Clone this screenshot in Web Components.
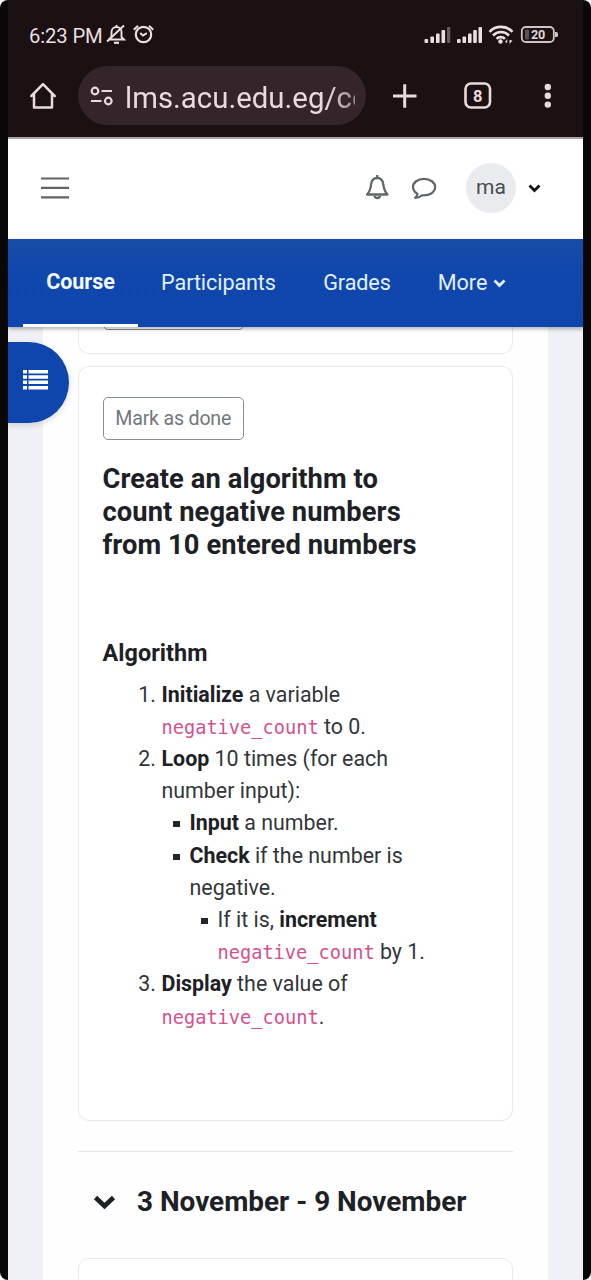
<!DOCTYPE html>
<html lang="en">
<head>
<meta charset="utf-8">
<title>Course</title>
<style>
html,body{margin:0;padding:0;background:#fff;width:591px;height:1280px;overflow:hidden}
body{font-family:Roboto,"Liberation Sans",sans-serif;color:#1d2125}
</style>
</head>
<body>
<phone-frame>
  <status-bar></status-bar>
  <browser-bar></browser-bar>
  <site-header></site-header>
  <course-nav>
    <nav-tab active style="--w:115px;--ls:-.1px">Course</nav-tab>
    <nav-tab style="--w:161px;--ls:-.1px">Participants</nav-tab>
    <nav-tab style="--w:116px;--ls:-.1px">Grades</nav-tab>
    <nav-tab more style="--w:114px;--ls:0px">More</nav-tab>
  </course-nav>
  <course-page></course-page>
</phone-frame>
<script>
const define = (name, html) => customElements.define(name, class extends HTMLElement {
  constructor() {
    super();
    const t = document.createElement('template');
    t.innerHTML = html;
    this.attachShadow({mode: 'open'}).append(t.content.cloneNode(true));
  }
});

define('phone-frame', `
<style>
:host{display:flex;flex-direction:column;box-sizing:border-box;width:591px;height:1280px;background:#fff;border:solid #080808;border-width:0 8px;border-radius:8px;overflow:hidden}
</style><slot></slot>`);

define('status-bar', `
<style>
:host{display:flex;flex:none;align-items:center;height:66px;box-sizing:border-box;padding:4px 25px 0 21px;background:#1b1113;color:#eadfe1;font-size:20.3px;letter-spacing:-.15px}
span{white-space:nowrap;width:76px;padding-top:1px}
svg{display:block;flex:none}
.gap{flex:1}
</style>
<span>6:23 PM</span>
<svg width="50" height="24" viewBox="0 0 50 24" fill="none" stroke="#eadfe1" stroke-width="1.9">
  <path d="M4 16.500 H19 L16.500 14 V9 A5 5 0 0 0 6.500 9 V13.500 L4 16.500"/><path d="M11.500 4V2"/>
  <path d="M2 18.500 L19 2.500" stroke-width="2"/><path d="M9 19.800h5" stroke-width="2.200"/>
  <circle cx="38.500" cy="11.500" r="7.700" stroke-width="2.200"/><path d="M35.200 10L38 12.500l3.800-2.300" stroke-width="2"/>
  <path d="M28.800 6.700l4.200-4M48.200 6.700L44 2.700" stroke-width="2"/>
</svg>
<div class="gap"></div>
<svg width="136" height="24" viewBox="422 23 136 24">
  <g fill="#eadfe1">
    <rect x="424.500" y="39" width="3.600" height="4" rx="1"/><rect x="430.400" y="36.500" width="3.600" height="6.500" rx="1"/><rect x="436" y="33.500" width="3.600" height="9.500" rx="1"/><rect x="441.500" y="30" width="3.600" height="13" rx="1"/><rect x="447" y="27" width="3.300" height="16" rx="1" fill="#665c5e"/>
    <rect x="457" y="39" width="3.600" height="4" rx="1"/><rect x="462.500" y="36.500" width="3.600" height="6.500" rx="1"/><rect x="468" y="33.500" width="3.600" height="9.500" rx="1"/><rect x="473.200" y="30" width="3.600" height="13" rx="1"/><rect x="478.500" y="27" width="3.500" height="16" rx="1"/>
    <circle cx="500.500" cy="41.500" r="2.200"/>
    <path d="M505 42l2.200-3v4zM512.500 40.500l-3 3.500v-4z"/>
  </g>
  <g fill="none" stroke="#eadfe1" stroke-width="2.600"><path d="M489.500 31.800a16 16 0 0 1 23 0"/><path d="M493 35.500a11 11 0 0 1 16 0"/><path d="M496.500 38.900a6 6 0 0 1 8.500 0"/></g>
  <rect x="521.800" y="27" width="32" height="15" rx="4" fill="none" stroke="#cfc5c7" stroke-width="1.800"/>
  <rect x="525" y="29.500" width="4" height="10" rx="1" fill="#5d5355"/>
  <path d="M555 32h1.500q1.500 0 1.500 1.500v2q0 1.500-1.500 1.500H555z" fill="#cfc5c7"/>
  <text x="538" y="39.200" text-anchor="middle" font-family="Roboto,sans-serif" font-weight="700" font-size="12.600" fill="#e0d6d8">20</text>
</svg>`);

define('browser-bar', `
<style>
:host{display:flex;flex:none;align-items:flex-start;height:73px;box-sizing:border-box;padding-left:21px;background:#1b1113;border-bottom:2px solid #aaa4a5;color:#eadadd}
svg{display:block;flex:none}
.pill{display:flex;align-items:center;box-sizing:border-box;width:288px;height:59px;margin-left:21px;border-radius:30px;background:#35242a;padding-left:11px}
.url{width:230px;overflow:hidden;white-space:nowrap;font-size:29.3px;line-height:44px;margin:4px 0 0 12px;letter-spacing:.05px;-webkit-mask-image:linear-gradient(90deg,#000 88%,rgba(0,0,0,.55))}
</style>
<svg width="28" height="59" viewBox="29 66 28 59" fill="none" stroke="currentColor" stroke-width="2.500" stroke-linejoin="round" stroke-linecap="round"><path d="M31.300 96L43 84.200 54.700 96M34 94v13.500h18V94"/></svg>
<div class="pill">
  <svg width="24" height="24" viewBox="89 83.500 24 24" fill="none" stroke="currentColor" stroke-width="2.200"><circle cx="95" cy="90.500" r="3.300"/><path d="M101.500 90.500H112M91 100.500h10.500"/><circle cx="108.300" cy="100.500" r="3.300"/></svg>
  <div class="url">lms.acu.edu.eg/co</div>
</div>
<svg width="216" height="59" viewBox="366 66 216 59" fill="none" stroke="currentColor">
  <path d="M393 96h23.500M404.700 84.300v23.400" stroke-width="3"/>
  <rect x="465.500" y="83.500" width="24.500" height="24" rx="5.500" stroke-width="2.600"/>
  <text x="477.800" y="101.500" text-anchor="middle" stroke="none" fill="currentColor" font-family="Roboto,sans-serif" font-weight="700" font-size="16.500">8</text>
  <g fill="currentColor" stroke="none"><circle cx="547.800" cy="87" r="3.200"/><circle cx="547.800" cy="95.800" r="3.200"/><circle cx="547.800" cy="104.600" r="3.200"/></g>
</svg>`);

define('site-header', `
<style>
:host{display:flex;flex:none;align-items:center;height:100px;box-sizing:border-box;padding:0 42px 2px 33px;background:#fff}
svg{display:block;flex:none}
.gap{flex:1}
.av{width:50px;height:50px;border-radius:50%;background:#e9ebee;color:#484d52;font-size:21px;line-height:49px;text-align:center;margin:0 12px 0 28px}
</style>
<svg width="30" height="24" viewBox="0 0 30 24" stroke="#67625f" stroke-width="2.200"><path d="M0 2.500h28M0 11.900h28M0 21.400h28"/></svg>
<div class="gap"></div>
<svg width="72" height="28" viewBox="365.500 174 72 28" fill="none" stroke="#64676a" stroke-width="2.300" stroke-linejoin="round">
  <path d="M366.500 194.500H387C384 191.500 383.300 188 382.800 184.500C382.400 180.500 380.300 178 376.700 178S371 180.500 370.600 184.500C370.200 188 369.500 191.500 366.500 194.500Z"/><path d="M376.700 175v3M374 195.800a2.700 2.200 0 0 0 5.400 0"/>
  <path d="M423.500 178.800c-6.200 0-11 3.700-11 8.300 0 2.900 1.800 5.300 4.500 6.800-.3 1.800-1 3-2.300 4 3 .1 5-.9 6.700-2.600 7.500.7 13.200-3 13.200-8.200 0-4.600-4.900-8.300-11.100-8.300Z"/>
</svg>
<div class="av">ma</div>
<svg width="13" height="10" viewBox="0 0 13 10" fill="none" stroke="#151515" stroke-width="2.800"><path d="M1.500 2.500l5 5 5-5"/></svg>`);

define('course-nav', `
<style>
:host{display:flex;flex:none;height:88px;box-sizing:border-box;padding-left:15px;background:linear-gradient(#194da8,#1047ad 35%,#0f46ad);position:relative;z-index:3;box-shadow:0 2px 4px rgba(0,0,0,.3)}
</style><slot></slot>`);

define('nav-tab', `
<style>
:host{display:flex;flex:none;box-sizing:border-box;width:var(--w);height:88px;align-items:center;justify-content:center;color:#e2f0ff;font-size:21.6px;letter-spacing:var(--ls);border-bottom:3px solid transparent;padding-top:2px}
:host([active]){font-weight:700;color:#f2faff;border-color:#fff;padding-top:0}
svg{display:none;margin:1px 0 0 6px}
:host([more]) svg{display:block}
</style><slot></slot><svg width="13" height="10" viewBox="0 0 13 10" fill="none" stroke="#e2f0ff" stroke-width="2.800"><path d="M1.500 2.500l5 5 5-5"/></svg>`);

define('done-button', `
<style>
:host{display:block;box-sizing:border-box;width:141.500px;height:43px;border:1.500px solid #898e93;border-radius:5px;color:#72777c;font-size:19.600px;line-height:41px;text-align:center;letter-spacing:-.2px;background:#fff}
</style><slot></slot>`);

define('activity-card', `
<style>
:host{display:block;box-sizing:border-box;width:435px;border:1.500px solid #e8e9eb;border-radius:11px;padding:0 23.500px;background:#fff}
</style><slot></slot>`);

define('course-page', `
<style>
:host{display:block;flex:1;min-height:0;box-sizing:border-box;background:#f0f1f6;padding:0 35px;position:relative;overflow:hidden}
.col{background:#fefefe;height:100%;box-sizing:border-box;padding-left:35px;display:flex;flex-direction:column}
activity-card{flex:none}
.prev{height:38px;margin-top:-11px}
.prev done-button{margin-top:-30px}
.main{height:755px;margin-top:12px;padding-top:29.500px}
h3{font-size:27.300px;line-height:33px;font-weight:700;margin:23px 0 0;letter-spacing:.08px;width:340px;white-space:nowrap}
h5{font-size:23.400px;line-height:28px;font-weight:700;margin:77px 0 12px;letter-spacing:.05px}
ol{margin:0;padding-left:59px;font-size:21.400px;line-height:32.200px;color:#32363a;list-style:none;white-space:nowrap}
ol,ul{list-style:none}
ul{margin:0;padding-left:28px}
li{position:relative}
.n{position:absolute;right:100%;margin-right:5.500px}
.sq{position:absolute;left:-16.500px;top:14px;width:7px;height:6px;background:#22262a}
b{color:#1d2125}
code{font-family:"DejaVu Sans Mono",monospace;font-size:18.650px;line-height:1;color:#d5508d}
hr{flex:none;width:435px;height:1.500px;border:0;margin:29.500px 0 0;background:#e2e4e6}
.sec{flex:none;display:flex;align-items:center;height:99px;padding-left:15px;font-size:27.900px;font-weight:700;letter-spacing:0;white-space:nowrap}
.sec svg{margin-right:21px}
.next{height:100px;margin-top:6.500px}
.drawer{position:absolute;left:0;top:15px;width:61px;height:81px;border-radius:0 41px 41px 0;background:#0f46ad;box-shadow:0 2px 6px rgba(0,0,0,.15);display:flex;align-items:center}
.drawer svg{margin:-5px 0 0 15px}
</style>
<div class="col">
  <activity-card class="prev"><done-button></done-button></activity-card>
  <activity-card class="main">
    <done-button>Mark as done</done-button>
    <h3>Create an algorithm to<br>count negative numbers<br>from 10 entered numbers</h3>
    <h5>Algorithm</h5>
    <ol>
      <li><span class="n">1.</span><b>Initialize</b> a variable<br><code>negative_count</code> to 0.</li>
      <li><span class="n">2.</span><b>Loop</b> 10 times (for each<br>number input):
        <ul>
          <li><i class="sq"></i><b>Input</b> a number.</li>
          <li><i class="sq"></i><b>Check</b> if the number is<br>negative.
            <ul><li><i class="sq"></i>If it is, <b>increment</b><br><code>negative_count</code> by 1.</li></ul>
          </li>
        </ul>
      </li>
      <li><span class="n">3.</span><b>Display</b> the value of<br><code>negative_count</code>.</li>
    </ol>
  </activity-card>
  <hr>
  <div class="sec"><svg width="23" height="18" viewBox="0 0 23 18" fill="none" stroke="#1d2125" stroke-width="4.600"><path d="M2.500 4.500l9 8.500 9-8.500"/></svg><span>3 November - 9 November</span></div>
  <activity-card class="next"></activity-card>
</div>
<div class="drawer"><svg width="25" height="20" viewBox="0 0 25 20" fill="#fff"><path d="M0 0h4v3.500H0zM5.500 0H25v3.500H5.500zM0 5.300h4v3.500H0zM5.500 5.300H25v3.500H5.500zM0 10.600h4v3.500H0zM5.500 10.600H25v3.500H5.500zM0 15.900h4v3.500H0zM5.500 15.900H25v3.500H5.500z"/></svg></div>`);
</script>
</body>
</html>
